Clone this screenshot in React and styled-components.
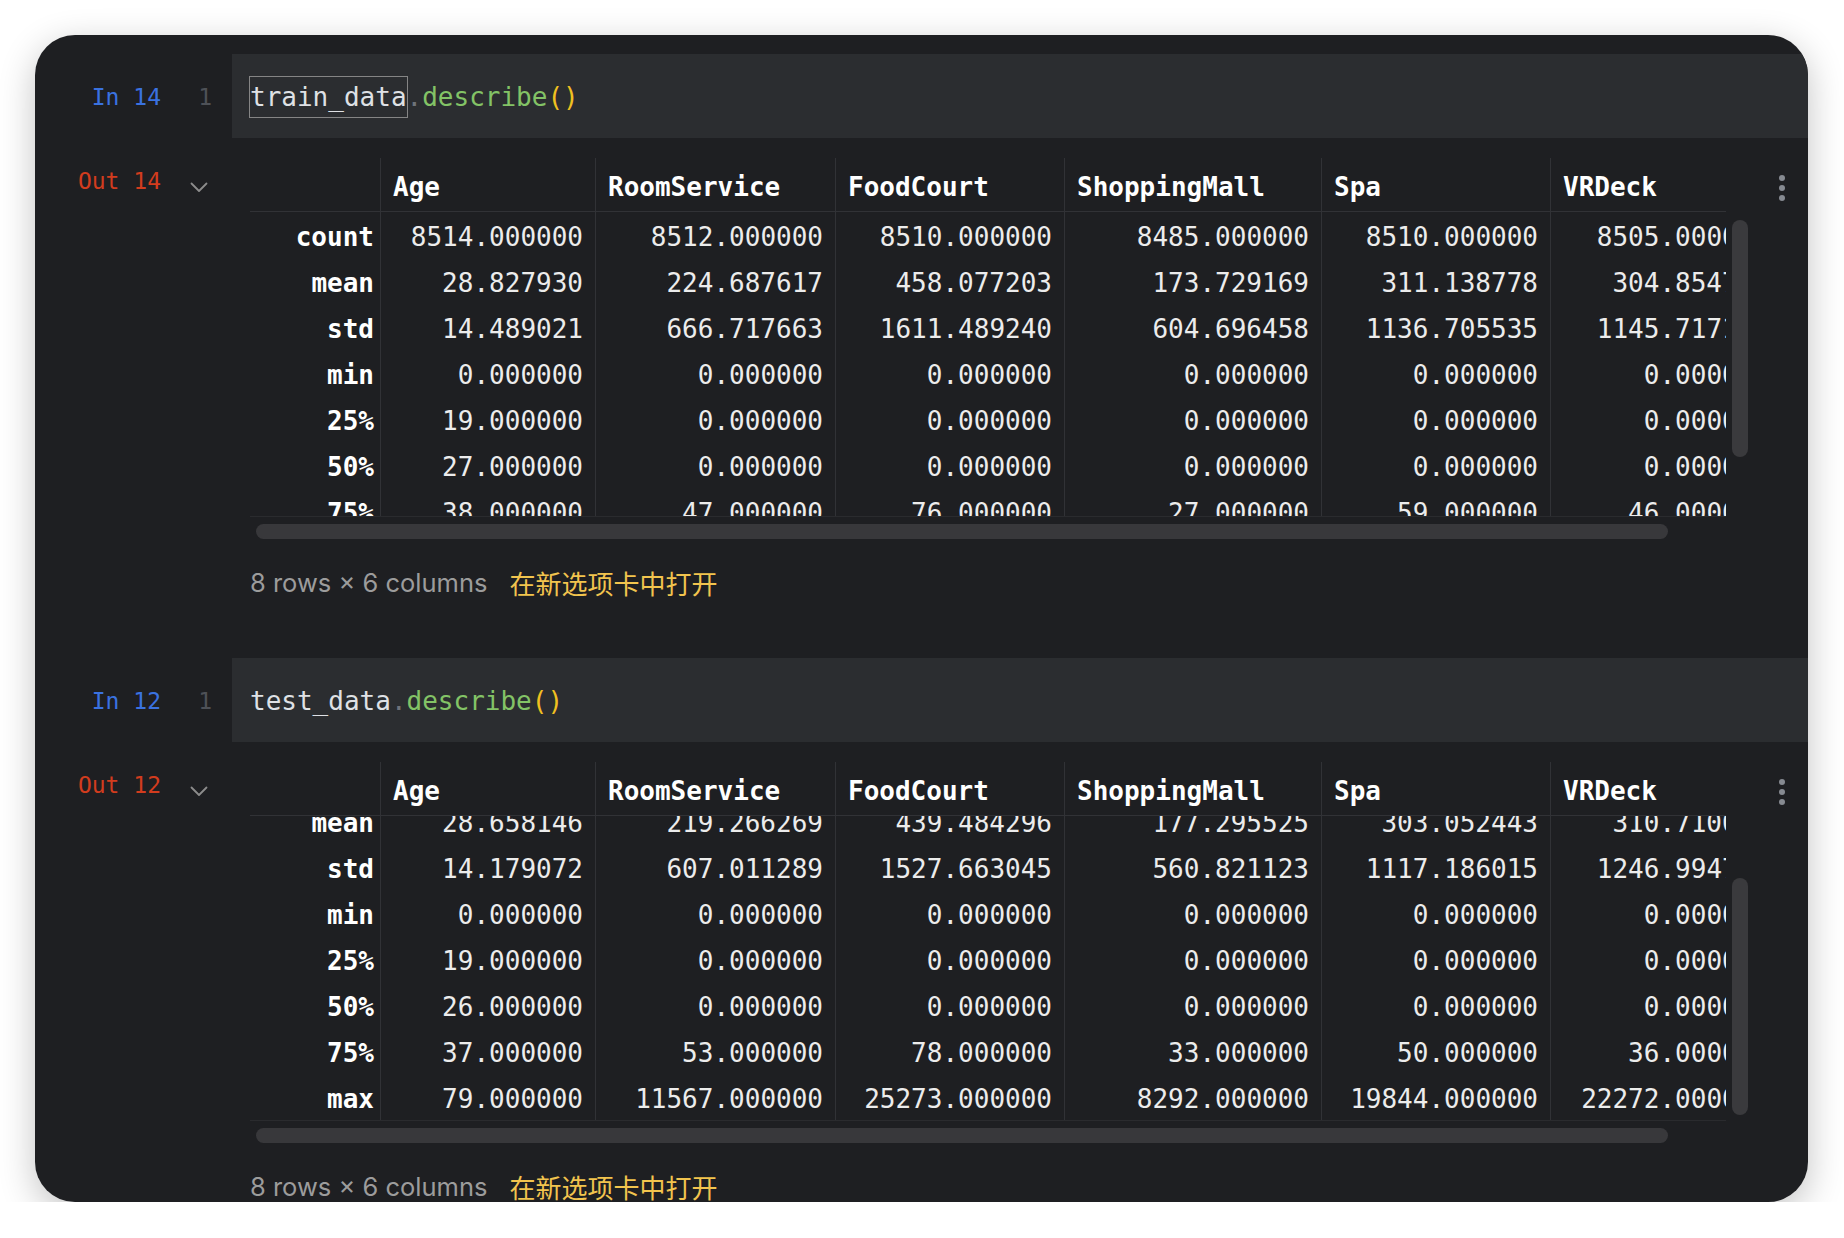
import React from 'react';
import styled, { createGlobalStyle } from 'styled-components';

const MONO = `"DejaVu Sans Mono", "Liberation Mono", monospace`;
const SANS = `Inter, "Noto Sans", "Noto Sans CJK SC", sans-serif`;
const COLUMNS = '130px 215px 240px 229px 257px 229px 231px';
const LINE = '#313236';

const GlobalStyle = createGlobalStyle`
	html, body {
		margin: 0;
		padding: 0;
		background: #ffffff;
	}
	* {
		box-sizing: border-box;
	}
`

const Window = styled.div`
	margin: 35px 36px 0 35px;
	height: 1167px;
	background: #1e1f22;
	border-radius: 40px;
	overflow: hidden;
	box-shadow: 0 10px 36px rgba(0, 0, 0, 0.24);
	padding-top: 19px;
	display: flex;
	flex-direction: column;
	gap: 60px;
`

const Cell = styled.section`
	display: flex;
	flex-direction: column;
	gap: 20px;
`

const InputRow = styled.div`
	display: flex;
	height: 84px;
`

const Gutter = styled.div`
	width: 197px;
	flex-shrink: 0;
	display: flex;
	align-items: ${p => (p.$top ? 'flex-start' : 'center')};
	padding-top: ${p => (p.$top ? '0' : '2px')};
	font-family: ${MONO};
	font-size: 23px;
`

const Prompt = styled.span`
	width: 126px;
	text-align: right;
	line-height: 46px;
	color: ${p => (p.$out ? '#d23c1e' : '#3a72e0')};
`

const LineNo = styled.span`
	width: 51px;
	text-align: right;
	color: #4e5157;
`

const Chevron = styled.svg`
	width: 18px;
	height: 11px;
	margin: 24px 0 0 29px;
`

const CodeBand = styled.div`
	flex: 1;
	background: #2b2d30;
	display: flex;
	align-items: center;
	padding: 2px 0 0 18px;
	font-family: ${MONO};
	font-size: 26px;
	color: #dfe1e5;
	white-space: pre;
`

const Token = styled.span`
	color: ${p => p.$color};
`

const Selected = styled.span`
	display: inline-block;
	line-height: 40px;
	box-shadow: 0 0 0 1px #858585;
`

const OutputRow = styled.div`
	display: flex;
`

const OutputBody = styled.div`
	flex: 1;
	padding-left: 18px;
	display: flex;
	flex-direction: column;
`

const TableFrame = styled.div`
	display: grid;
	grid-template-columns: 1476px 22px 1fr;
	grid-template-rows: 54px 305px;
`

const Viewport = styled.div`
	grid-column: 1;
	grid-row: 1 / span 2;
	overflow: hidden;
	display: flex;
	flex-direction: column;
	border-bottom: 1px solid #2a2b2e;
`

const Row = styled.div`
	display: grid;
	grid-template-columns: ${COLUMNS};
	grid-auto-rows: 46px;
	width: max-content;
	flex-shrink: 0;
	font-family: ${MONO};
	font-size: 26px;
	line-height: 42px;
	color: #ececec;
`

const HeaderRow = styled(Row)`
	grid-auto-rows: 54px;
	height: 54px;
	border-bottom: 1px solid ${LINE};
	font-weight: bold;
	color: #ffffff;
`

const HeadCell = styled.div`
	display: flex;
	align-items: center;
	padding: 4px 0 0 12px;
	white-space: nowrap;
	border-left: ${p => (p.$first ? 'none' : `1px solid ${LINE}`)};
`

const IndexCell = styled.div`
	text-align: right;
	padding: 4px 6px 0 0;
	font-weight: bold;
	color: #ffffff;
`

const ValueCell = styled.div`
	text-align: right;
	padding: 4px 12px 0 0;
	white-space: nowrap;
	border-left: 1px solid ${LINE};
`

const Body = styled.div`
	flex: 1;
	min-height: 0;
	overflow: hidden;
	display: flex;
	flex-direction: column;
	justify-content: ${p => (p.$atEnd ? 'flex-end' : 'flex-start')};
`

const VTrack = styled.div`
	grid-column: 2;
	grid-row: 2;
	display: flex;
	flex-direction: column;
	justify-content: ${p => (p.$atEnd ? 'flex-end' : 'flex-start')};
	align-items: flex-end;
	padding: 8px 0 6px;
`

const VThumb = styled.div`
	width: 16px;
	height: 237px;
	border-radius: 8px;
	background: #3a3a3d;
`

const Kebab = styled.div`
	grid-column: 3;
	grid-row: 1;
	display: flex;
	flex-direction: column;
	align-items: center;
	justify-content: center;
	gap: 4px;
	padding: 6px 0 0 8px;

	span {
		width: 6px;
		height: 6px;
		border-radius: 50%;
		background: #868a91;
	}
`

const HTrack = styled.div`
	width: 1476px;
	margin-top: 7px;
	padding-left: 6px;
`

const HThumb = styled.div`
	width: 1412px;
	height: 15px;
	border-radius: 8px;
	background: #38383b;
`

const Footer = styled.div`
	margin-top: 29px;
	display: flex;
	align-items: center;
	gap: 22px;
	font-family: ${SANS};
	font-size: 25.5px;
	line-height: 30px;
`

const Meta = styled.span`
	color: #9c9c9c;
`

const OpenLink = styled.span`
	color: #f2c44e;
	font-family: "Noto Sans CJK SC", sans-serif;
	font-size: 26px;
`

const COLS = ['Age', 'RoomService', 'FoodCourt', 'ShoppingMall', 'Spa', 'VRDeck'];
const Z = '0.000000';

const TRAIN = [
	['count', '8514.000000', '8512.000000', '8510.000000', '8485.000000', '8510.000000', '8505.000000'],
	['mean', '28.827930', '224.687617', '458.077203', '173.729169', '311.138778', '304.854791'],
	['std', '14.489021', '666.717663', '1611.489240', '604.696458', '1136.705535', '1145.717189'],
	['min', Z, Z, Z, Z, Z, Z],
	['25%', '19.000000', Z, Z, Z, Z, Z],
	['50%', '27.000000', Z, Z, Z, Z, Z],
	['75%', '38.000000', '47.000000', '76.000000', '27.000000', '59.000000', '46.000000'],
	['max', '79.000000', '14327.000000', '29813.000000', '23492.000000', '22408.000000', '24133.000000'],
];

const TEST = [
	['count', '4186.000000', '4195.000000', '4171.000000', '4179.000000', '4176.000000', '4197.000000'],
	['mean', '28.658146', '219.266269', '439.484296', '177.295525', '303.052443', '310.710031'],
	['std', '14.179072', '607.011289', '1527.663045', '560.821123', '1117.186015', '1246.994742'],
	['min', Z, Z, Z, Z, Z, Z],
	['25%', '19.000000', Z, Z, Z, Z, Z],
	['50%', '26.000000', Z, Z, Z, Z, Z],
	['75%', '37.000000', '53.000000', '78.000000', '33.000000', '50.000000', '36.000000'],
	['max', '79.000000', '11567.000000', '25273.000000', '8292.000000', '19844.000000', '22272.000000'],
];

function DataTable({ rows, atEnd }) {
	return (
		<TableFrame>
			<Viewport>
				<HeaderRow>
					<HeadCell $first />
					{COLS.map(c => <HeadCell key={c}>{c}</HeadCell>)}
				</HeaderRow>
				<Body $atEnd={atEnd}>
					{rows.map(([label, ...vals]) => (
						<Row key={label}>
							<IndexCell>{label}</IndexCell>
							{vals.map((v, i) => <ValueCell key={i}>{v}</ValueCell>)}
						</Row>
					))}
				</Body>
			</Viewport>
			<VTrack $atEnd={atEnd}>
				<VThumb />
			</VTrack>
			<Kebab>
				<span /><span /><span />
			</Kebab>
		</TableFrame>
	);
}

function NotebookCell({ n, name, selected, rows, atEnd }) {
	return (
		<Cell>
			<InputRow>
				<Gutter>
					<Prompt>In {n}</Prompt>
					<LineNo>1</LineNo>
				</Gutter>
				<CodeBand>
					{selected ? <Selected>{name}</Selected> : name}
					<Token $color="#6f737a">.</Token>
					<Token $color="#83c366">describe</Token>
					<Token $color="#f0c020">()</Token>
				</CodeBand>
			</InputRow>
			<OutputRow>
				<Gutter $top>
					<Prompt $out>Out {n}</Prompt>
					<Chevron viewBox="0 0 18 11" fill="none">
						<polyline points="1.5,1.5 9,9 16.5,1.5" stroke="#8c8c8c" strokeWidth="1.8" strokeLinecap="round" strokeLinejoin="round" />
					</Chevron>
				</Gutter>
				<OutputBody>
					<DataTable rows={rows} atEnd={atEnd} />
					<HTrack>
						<HThumb />
					</HTrack>
					<Footer>
						<Meta>8 rows × 6 columns</Meta>
						<OpenLink>在新选项卡中打开</OpenLink>
					</Footer>
				</OutputBody>
			</OutputRow>
		</Cell>
	);
}

export default function App() {
	return (
		<>
			<GlobalStyle />
			<Window>
				<NotebookCell n={14} name="train_data" selected rows={TRAIN} />
				<NotebookCell n={12} name="test_data" rows={TEST} atEnd />
			</Window>
		</>
	);
}
